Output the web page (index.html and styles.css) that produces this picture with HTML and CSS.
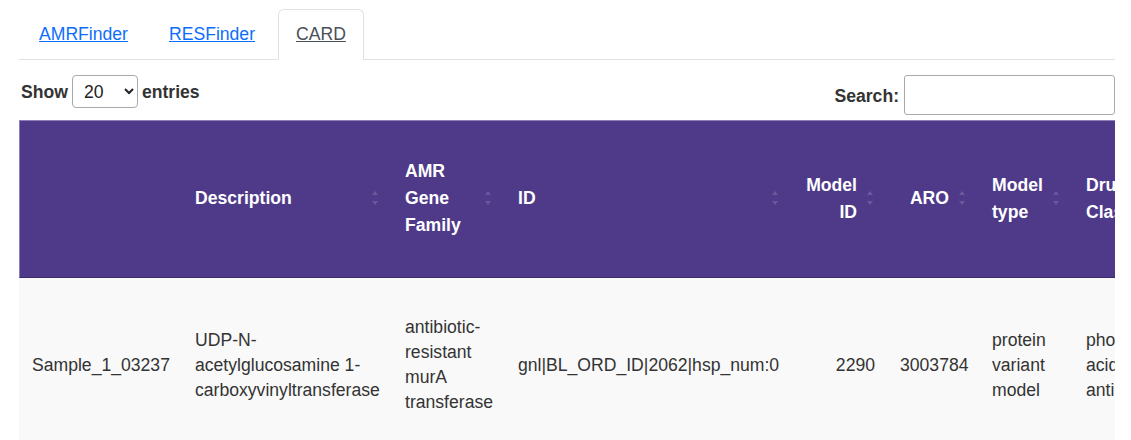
FILE: index.html
```html
<!DOCTYPE html>
<html>
<head>
<meta charset="utf-8">
<link rel="stylesheet" href="styles.css">
</head>
<body>
<div class="page">
  <ul class="tabs">
    <li class="tab"><a href="#amr">AMRFinder</a></li>
    <li class="tab"><a href="#res">RESFinder</a></li>
    <li class="tab active"><a href="#card">CARD</a></li>
  </ul>

  <div class="controls">
    <label class="length">Show
      <select class="length-select">
        <option>10</option>
        <option selected>20</option>
        <option>50</option>
        <option>100</option>
      </select>
      entries</label>
    <label class="search"><span class="search-text">Search:</span> <input class="search-input" type="search"></label>
  </div>

  <div class="table-wrap">
    <table class="data">
      <thead>
        <tr>
          <th class="c1 first"></th>
          <th class="c2 sort">Description</th>
          <th class="c3 sort">AMR Gene Family</th>
          <th class="c4 sort">ID</th>
          <th class="c5 sort num">Model ID</th>
          <th class="c6 sort num">ARO</th>
          <th class="c7 sort">Model type</th>
          <th class="c8 sort">Drug Class</th>
          <th class="c9 sort">Resistance Mechanism</th>
          <th class="c10 sort">Identity</th>
        </tr>
      </thead>
      <tbody>
        <tr>
          <td>Sample_1_03237</td>
          <td>UDP-N-acetylglucosamine 1-carboxyvinyltransferase</td>
          <td>antibiotic-resistant murA transferase</td>
          <td class="nowrap">gnl|BL_ORD_ID|2062|hsp_num:0</td>
          <td class="num">2290</td>
          <td class="num">3003784</td>
          <td>protein variant model</td>
          <td>phosphonic acid antibiotic</td>
          <td>antibiotic target alteration</td>
          <td class="num">99.32</td>
        </tr>
      </tbody>
    </table>
  </div>
</div>
</body>
</html>
```

FILE: styles.css
```css
html, body {
  margin: 0;
  padding: 0;
  background: #ffffff;
}

body {
  font-family: "Liberation Sans", Arial, sans-serif;
  font-size: 17.6px;
  line-height: 26px;
  color: #333333;
}

.page {
  width: 1096px;
  padding: 9px 0 0 19px;
}

/* Tabs */
.tabs {
  display: flex;
  gap: 5px;
  margin: 0;
  padding: 0 0 0 2px;
  list-style: none;
  border-bottom: 1px solid #dee2e6;
}

.tab {
  margin-bottom: -1px;
}

.tab a {
  display: block;
  padding: 11px 17px 12px 17px;
  border: 1px solid transparent;
  border-radius: 6px 6px 0 0;
  color: #0d6efd;
  text-decoration: underline;
}

.tab.active a {
  color: #495057;
  background: #ffffff;
  border-color: #dee2e6 #dee2e6 #ffffff;
}

/* Controls */
.controls {
  display: flex;
  justify-content: space-between;
  align-items: flex-start;
  margin-top: 15px;
  height: 40px;
}

.length {
  display: flex;
  align-items: center;
  gap: 4px;
  height: 33px;
  padding-left: 2px;
  font-weight: bold;
}

.length-select {
  width: 66px;
  height: 33px;
  padding: 0 0 0 7px;
  border: 1px solid #aaaaaa;
  border-radius: 4px;
  background-color: #ffffff;
  font-family: "Liberation Sans", Arial, sans-serif;
  font-size: 17.6px;
  color: #222222;
}

.search {
  display: flex;
  align-items: center;
  gap: 5px;
  height: 40px;
  font-weight: bold;
}

.search-text {
  padding-top: 1px;
}

.search-input {
  box-sizing: border-box;
  width: 211px;
  height: 40px;
  border: 1px solid #aaaaaa;
  border-radius: 3px;
  padding: 0 6px;
  font-family: "Liberation Sans", Arial, sans-serif;
  font-size: 17.6px;
  background: #ffffff;
}

/* Table */
.table-wrap {
  margin-top: 5px;
  width: 1096px;
  overflow: hidden;
}

.data {
  table-layout: fixed;
  border-collapse: separate;
  border-spacing: 0;
  width: 1524px;
}

.data th,
.data td {
  box-sizing: border-box;
  vertical-align: middle;
}

.data th {
  position: relative;
  padding: 37px 30px 38px 13px;
  line-height: 27px;
  background: #4f3a8a;
  color: #ffffff;
  font-weight: bold;
  text-align: left;
  border-top: 1px solid #8d80b8;
  border-bottom: 1px solid #3b2a6e;
}

.data th.first {
  border-left: 1px solid #8d80b8;
}

.data th.num,
.data td.num {
  text-align: right;
}

.data th.sort::before,
.data th.sort::after {
  content: "";
  position: absolute;
  right: 14px;
  width: 0;
  height: 0;
  border-left: 3.5px solid transparent;
  border-right: 3.5px solid transparent;
}

.data th.sort::before {
  top: calc(50% - 8px);
  border-bottom: 4px solid rgba(255, 255, 255, 0.16);
}

.data th.sort::after {
  top: calc(50% + 2px);
  border-top: 4px solid rgba(255, 255, 255, 0.16);
}

.data td {
  padding: 37px 11px 40px 13px;
  line-height: 25px;
  background: #f9f9f9;
  color: #333333;
}

.data td.num {
  padding-right: 12px;
}

.data td.nowrap {
  white-space: nowrap;
}

.c1 { width: 163px; }
.c2 { width: 210px; }
.c3 { width: 113px; }
.c4 { width: 287px; }
.c5 { width: 95px; }
.c6 { width: 92px; }
.c7 { width: 94px; }
.c8 { width: 120px; }
.c9 { width: 200px; }
.c10 { width: 150px; }
```
